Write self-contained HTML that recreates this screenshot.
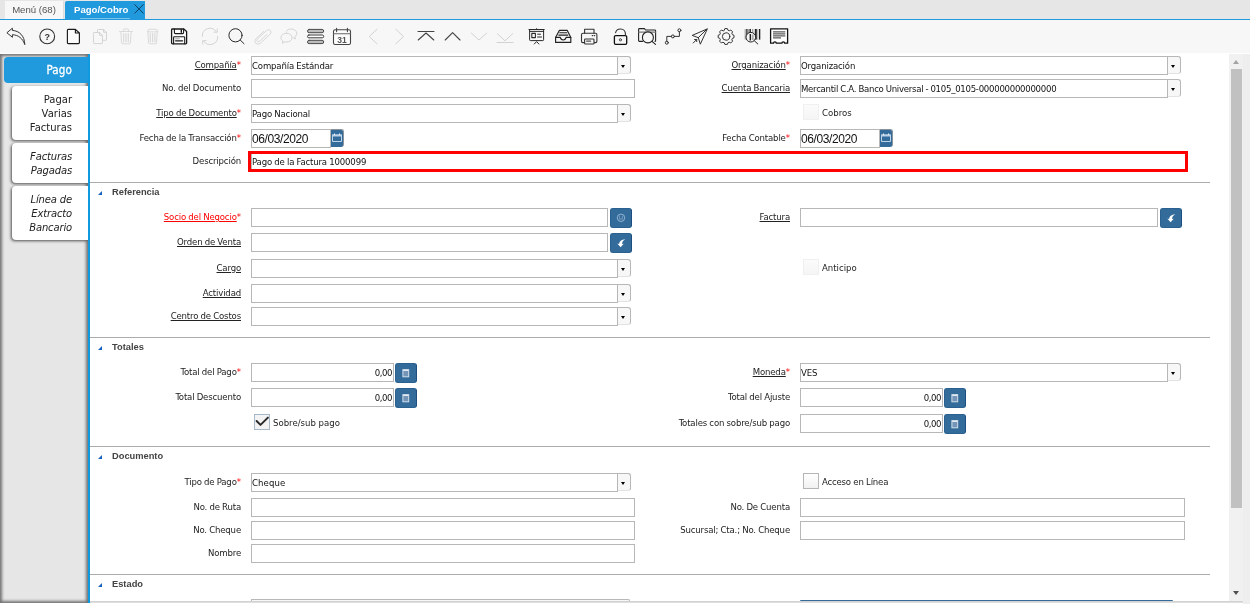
<!DOCTYPE html>
<html lang="es"><head><meta charset="utf-8"><title>Pago/Cobro</title>
<style>
*{box-sizing:border-box;margin:0;padding:0}
html,body{width:1250px;height:604px;overflow:hidden;background:#fff}
body{position:relative;font-family:"Liberation Sans",sans-serif;font-size:10px;color:#222}
.abs{position:absolute}
#app{position:absolute;left:0;top:0;width:1250px;height:604px;overflow:hidden;will-change:transform}
:root{--ff:"DejaVu Sans Condensed","DejaVu Sans","Liberation Sans",sans-serif}
#tabbar{position:absolute;left:0;top:0;width:1250px;height:19px;background:#e6e6e6}
#tabline{position:absolute;left:0;top:19px;width:1250px;height:1px;background:#2199dd}
.toptab{position:absolute;top:1px;height:18px;font-size:9.6px;line-height:17px;white-space:nowrap}
#tmenu{left:5px;width:59px;background:#f7f7f7;color:#555;text-align:center;border-right:1px solid #ddd}
.tul{position:absolute;left:15px;top:17px;width:50px;height:1px;background:#7cc3ec}
#tpago{left:65px;width:80px;background:#2199dd;color:#fff;font-weight:bold;padding-left:9px;border-radius:2px 0 0 0}
#toolbar{position:absolute;left:0;top:20px;width:1250px;height:33px;background:#f7f7f7}
#left{position:absolute;left:0;top:54px;width:88px;height:549px;background:#e6e6e6;box-shadow:inset 0 0 3px 2px rgba(0,0,0,.5)}
#vline{position:absolute;left:88px;top:54px;width:2px;height:549px;background:#0f9ae0}
.ltab{position:absolute;right:0;font-family:"DejaVu Sans",sans-serif;font-size:10px;line-height:14px;text-align:right;padding:7px 16px 5px 0;border-radius:4px 0 0 4px;background:#fff;color:#222;box-shadow:-1px 1px 3px rgba(0,0,0,.65)}
.ltab.sel{background:#2199dd;color:#fff;box-shadow:none;font-family:"DejaVu Sans Condensed","DejaVu Sans",sans-serif;font-size:11.5px;padding:6px 16px 6px 0;-webkit-text-stroke:0.3px #fff;letter-spacing:0.15px}
.ltab i{font-style:italic;letter-spacing:-0.15px}
#content{position:absolute;left:90px;top:53px;width:1139px;height:548px;background:#fff;overflow:hidden}
#sbar{position:absolute;left:1229px;top:54px;width:14px;height:547px;background:#f1f1f1}
#sbar:before{content:"";position:absolute;left:4px;top:6px;border:solid transparent;border-width:0 3.5px 4px 3.5px;border-bottom-color:#a3a3a3}
#sbar:after{content:"";position:absolute;left:4px;top:537px;border:solid transparent;border-width:4px 3.5px 0 3.5px;border-top-color:#505050}
#sthumb{position:absolute;left:2px;top:15px;width:11px;height:439px;background:#c1c1c1}
#rstrip{position:absolute;left:1243px;top:54px;width:7px;height:550px;background:#eeeeee}
#bshadow{position:absolute;left:90px;top:601px;width:1153px;height:2px;background:linear-gradient(#cbcbcb,#e4e4e4)}
.lbl{position:absolute;white-space:nowrap;text-align:right;font-family:var(--ff);font-size:9.5px;line-height:12px;letter-spacing:-0.15px;word-spacing:-0.3px;color:#222}
.lbl u{text-decoration:underline}
.lbl b{color:#f00;font-weight:normal;letter-spacing:0}
.lbl.red{color:#f00}
.inp{position:absolute;height:19px;border:1px solid #b7b7b7;background:#fff;font-family:var(--ff);font-size:9.5px;line-height:17px;letter-spacing:-0.15px;word-spacing:-0.3px;padding-left:0;white-space:nowrap;overflow:hidden;color:#111}
.inp.num{text-align:right;padding-right:1px;letter-spacing:-0.45px}
.inp.date{font-family:"Liberation Sans",sans-serif;font-size:12px;letter-spacing:-0.4px;word-spacing:0;line-height:18px}
.cbtn{position:absolute;width:13px;height:18px;border:1px solid #b7b7b7;border-left:none;border-bottom-color:#e2e2e2;border-radius:0 3px 3px 0;background:#f7f7f7}
.cbtn:after{content:"";position:absolute;left:3px;top:8px;border:solid transparent;border-width:3px 2.5px 0 2.5px;border-top-color:#000}
.bbtn{position:absolute;width:22px;height:20px;border-radius:3px;background:#336b9b;border:1px solid #2a6191;border-right-color:#1c4f80}
.bbtn svg{position:absolute;left:-1px;top:-1px}
.dbtn{position:absolute;width:13px;height:18px;border-radius:0 3px 3px 0;background:#336b9b;border-top:1px solid #8a939b;border-right:1px solid #8a939b}
.dbtn svg{position:absolute;left:0;top:-1px}
.sep{position:absolute;left:90px;width:1120px;height:1px;background:#ababab}
.sec{position:absolute;left:112px;font-weight:bold;font-size:9.3px;line-height:12px;color:#444;white-space:nowrap}
.tri{position:absolute;left:98px;width:0;height:0;border-left:4px solid transparent;border-bottom:4px solid #1560c0}
.chk{position:absolute;width:16px;height:16px;border:1px solid #b5b5b5;background:linear-gradient(#fff,#f1f1f1)}
.chk.on{border-color:#a7b8c7;background:#f3f3f3}
.chk svg{position:absolute;left:-1px;top:-1px}
.chk.dis{border-color:#f0f0f0;background:linear-gradient(#fbfbfb,#f5f5f5)}
.ctext{position:absolute;white-space:nowrap;font-family:var(--ff);font-size:9.5px;line-height:12px;letter-spacing:0;color:#222}
</style></head>
<body>
<div id="app">
<div id="tabbar"></div>
<div class="toptab" id="tmenu">Menú (68)</div>
<div class="toptab" id="tpago">Pago/Cobro<span class="tul"></span><svg class="abs" style="left:68px;top:2px" width="12" height="12" viewBox="0 0 12 12"><path d="M1.4 1.300 L10.600 10.500 M10.600 1.300 L1.400 10.500" stroke="#0d3f63" stroke-width="1" fill="none"/></svg></div>
<div id="tabline"></div>
<div id="toolbar"></div>
<svg class="abs" style="left:0;top:20px" width="800" height="34" viewBox="0 20 800 34" fill="none" stroke="#333" stroke-width="1" stroke-linecap="round" stroke-linejoin="round">
<!-- undo -->
<path d="M7.2 32.5 L12.4 28.2 L12.4 30.4 C19 30.8 24.6 35.5 24.8 44.6 C22.5 38.3 18.5 35 12.4 34.7 L12.4 36.9 Z"/>
<!-- help -->
<circle cx="47.2" cy="36.4" r="7.4" stroke-width="1.1"/>
<text x="47.2" y="39.6" style="font-family:'Liberation Sans',sans-serif" font-size="9" font-weight="bold" text-anchor="middle" fill="#333" stroke="none">?</text>
<!-- new -->
<path d="M68.2 29.3 H75.4 L79.4 33 V42.6 Q79.4 43.6 78.4 43.6 H68.2 Q67.4 43.6 67.4 42.6 V30.3 Q67.4 29.3 68.2 29.3 Z M75.4 29.3 V33 H79.4" stroke="#1a1a1a" stroke-width="1.15" fill="#fbfbfb"/>
<!-- copy (disabled) -->
<g stroke="#d4d4d4">
<path d="M97.5 32 V30.2 Q97.5 29.5 98.2 29.5 H103.5 L106.5 32.3 V39.6 Q106.5 40.3 105.8 40.3 H103"/>
<path d="M103.5 29.5 V32.3 H106.5"/>
<path d="M94.2 32.5 H99.5 L102.5 35.3 V42.8 Q102.5 43.6 101.8 43.6 H94.2 Q93.5 43.6 93.5 42.8 V33.2 Q93.5 32.5 94.2 32.5 Z M99.5 32.5 V35.3 H102.5"/>
</g>
<!-- trash 1 (disabled) -->
<g stroke="#dadada">
<path d="M119.5 31.5 H132.5 M123.5 31.5 V29.6 Q123.5 29 124.1 29 H127.9 Q128.5 29 128.5 29.6 V31.5 M120.8 31.5 L121.6 43 Q121.7 43.8 122.5 43.8 H129.5 Q130.3 43.8 130.4 43 L131.2 31.5"/>
<path d="M123.7 33.5 V41.8 M126 33.5 V41.8 M128.3 33.5 V41.8" stroke-width="1.2"/>
</g>
<!-- trash 2 (disabled) -->
<g stroke="#dadada">
<path d="M147.3 31.5 Q147.6 29.2 150 29.2 H155 Q157.6 29.2 157.9 31.5 Z M147.9 31.5 L148.6 43 Q148.7 43.8 149.5 43.8 H155.6 Q156.4 43.8 156.5 43 L157.3 31.5"/>
<path d="M150.3 33.5 V41.8 M152.6 33.5 V41.8 M154.9 33.5 V41.8" stroke-width="1.2"/>
</g>
<!-- save -->
<g stroke="#1a1a1a" stroke-width="1.3">
<path d="M172.5 29 H183.8 L186.6 31.6 V43 Q186.6 43.8 185.8 43.8 H172.5 Q171.6 43.8 171.6 43 V29.8 Q171.6 29 172.5 29 Z" fill="#fff"/>
<path d="M174.4 29 V32.6 Q174.4 33.6 175.4 33.6 H182.6 Q183.6 33.6 183.6 32.6 V29" stroke-width="1.1"/>
<path d="M181.3 29.8 V32.2" stroke-width="1.4"/>
<path d="M173.6 43.8 V37.6 Q173.6 36.8 174.4 36.8 H183.9 Q184.7 36.8 184.7 37.6 V43.8" stroke-width="1.1"/>
<path d="M175.6 40.8 H182.6" stroke-width="1.3"/>
<path d="M175.6 38.8 H179.3" stroke="#999" stroke-width="0.9"/>
</g>
<!-- refresh (disabled) -->
<g stroke="#d4d4d4">
<path d="M202.3 36.4 A7.6 7.6 0 0 1 216.3 31.8 M217.3 28.8 V32.2 H213.9"/>
<path d="M217.7 36.4 A7.6 7.6 0 0 1 203.7 41 M202.7 44 V40.6 H206.1"/>
</g>
<!-- search -->
<g stroke="#2a2a2a" stroke-width="1">
<circle cx="235.5" cy="35.3" r="6.6"/>
<path d="M240.3 40.1 L244 43.7"/>
</g>
<!-- paperclip (disabled) -->
<g stroke="#d8d8d8">
<path d="M266.8 34.6 L259.8 41.2 Q258.4 42.4 257.3 41.3 Q256.3 40.2 257.5 39 L266.6 30.5 Q268.6 28.7 270.3 30.4 Q272 32.200 270.100 34.200 L260.500 43.200 Q257.900 45.400 255.700 43.200 Q253.700 41.000 256.000 38.600 L263.8 31.3"/>
</g>
<!-- chat (disabled) -->
<g stroke="#d4d4d4">
<path d="M286.500 33.200 C283.200 33.200 280.900 35.200 280.900 37.600 C280.900 39.000 281.700 40.200 282.900 41.000 L282.300 43.200 L284.800 41.800 C285.300 41.900 285.900 42.000 286.500 42.000 C289.800 42.000 292.100 40.000 292.100 37.600 C292.100 35.200 289.800 33.200 286.500 33.200 Z"/>
<path d="M286.300 31.200 C287.300 29.800 289.100 29.000 291.200 29.000 C294.500 29.000 296.800 31.000 296.800 33.400 C296.800 34.800 296.000 36.000 294.900 36.800 L295.400 39.000 L293.600 38.000"/>
</g>
<!-- grid toggle -->
<g stroke="#4a4a4a" stroke-width="1">
<rect x="307.5" y="29.4" width="16.2" height="3.300" rx="1.650" fill="#bdbdbd"/>
<rect x="307.5" y="35" width="16.2" height="2.800" rx="1.400" fill="#fff" stroke="#3a3a3a"/>
<rect x="307.5" y="40.3" width="16.2" height="3.300" rx="1.650" fill="#bdbdbd"/>
</g>
<!-- calendar -->
<g stroke="#444" stroke-width="1.1">
<rect x="333.500" y="29.800" width="17" height="14.700" rx="1.600" fill="#fcfcfc"/>
<path d="M333.500 33.700 H350.500" stroke="#666"/>
<path d="M336.600 28.200 V31.600 M347.400 28.200 V31.600"/>
<text x="342" y="42.600" style="font-family:'Liberation Sans',sans-serif" font-size="8.500" font-weight="bold" text-anchor="middle" fill="#555" stroke="none">31</text>
</g>
<!-- nav -->
<g stroke="#d2d2d2" stroke-width="1">
<path d="M377 29.200 L369.300 36.500 L377 43.800"/>
<path d="M395.800 29.200 L403.500 36.500 L395.800 43.800"/>
</g>
<g stroke="#444" stroke-width="1.100">
<path d="M418 31.500 H434 M418.200 40 L426 33 L433.800 40"/>
<path d="M445.200 40 L452.600 32.700 L460 40"/>
</g>
<g stroke="#d2d2d2" stroke-width="1">
<path d="M471.300 33 L479 40 L486.700 33"/>
<path d="M497.300 33.600 L505 40.800 L512.700 33.600 M497 42.500 H513"/>
</g>
<!-- report -->
<g stroke="#2a2a2a" stroke-width="1">
<path d="M529 29.500 H544.200 M529.600 29.500 V39.800 Q529.600 40.600 530.400 40.600 H542.800 Q543.600 40.600 543.600 39.800 V29.500 M529.600 31.400 H543.600 M536.600 28.700 V29.500"/>
<rect x="531.800" y="33.400" width="3.600" height="4.200" stroke-width="1.100"/>
<path d="M537.600 34.200 H540.500 M537.600 37 H541.500" stroke-width="1"/>
<path d="M534.300 44 L536.600 41.600 L538.900 44"/>
</g>
<!-- archive -->
<g stroke="#222" stroke-width="1.150">
<path d="M555.600 37.400 L559.300 30.400 H567.300 L570.800 37.400 V42.400 H555.600 Z"/>
<path d="M555.600 37.400 H560.300 Q560.800 40 563.200 40 Q565.600 40 566.100 37.400 H570.800"/>
<path d="M559.800 32.700 H566.800" stroke-width="1.100"/>
<path d="M558.800 35.100 H567.800" stroke-width="1.100"/>
</g>
<!-- printer -->
<g stroke="#333" stroke-width="1.100">
<path d="M584.600 33.300 V29.200 H594 V33.300"/>
<path d="M584.600 42.600 H582.800 Q581.500 42.600 581.500 41.300 V34.800 Q581.500 33.300 583 33.300 H595.400 Q596.900 33.300 596.900 34.800 V41.300 Q596.900 42.600 595.600 42.600 H594"/>
<rect x="584.600" y="39" width="9.400" height="5" rx="0.800" fill="#f7f7f7"/>
<path d="M586.600 41.200 H590.600" stroke-width="1.200" stroke="#555"/>
<path d="M592.200 35.600 H592.700 M594.200 35.600 H594.700" stroke-width="1.100"/>
</g>
<!-- lock -->
<g stroke="#111" stroke-width="1.300">
<rect x="614.400" y="35.600" width="12.300" height="8.700" rx="1.200"/>
<path d="M615.600 32.700 A5 5 0 0 1 625.400 33.400 V35.600" stroke-width="1.100" stroke="#333"/>
<circle cx="620.400" cy="39.800" r="1.100" stroke-width="1" stroke="#444"/>
</g>
<!-- zoom across -->
<g stroke="#222" stroke-width="1.100">
<path d="M642.500 41.400 H639.400 Q638.600 41.400 638.600 40.600 V29.400 Q638.600 28.600 639.400 28.600 H644.400 L645.600 30 H654.800 Q655.600 30 655.600 30.800 V40.600 Q655.600 41.300 655 41.400"/>
<path d="M638.600 32.100 H655.600" stroke="#777"/>
<circle cx="647.900" cy="37.400" r="5.500" fill="#f7f7f7"/>
<path d="M652 41.400 L655.500 44.400"/>
</g>
<!-- workflow -->
<g stroke="#333" stroke-width="1">
<circle cx="666.800" cy="42.700" r="1.500"/><circle cx="672.900" cy="36.400" r="1.500"/><circle cx="679.400" cy="30.300" r="1.500"/>
<path d="M666.800 41.200 V36.400 H671.400 M674.400 36.400 H679.400 V31.800"/>
</g>
<!-- send -->
<g stroke="#333" stroke-width="1">
<path d="M707 29 L692.200 35.400 L698.300 37.700 L700.200 43.800 Z M707 29 L698.300 37.700"/>
<path d="M693.200 43 L696.600 39.600 M694.600 39.500 H696.700 V41.600"/>
</g>
<!-- gear -->
<g stroke="#333" stroke-width="1">
<path d="M724.28 30.16 L724.85 28.60 L727.35 28.60 L727.92 30.16 L729.30 30.73 L730.80 30.03 L732.57 31.80 L731.87 33.30 L732.44 34.68 L734.00 35.25 L734.00 37.75 L732.44 38.32 L731.87 39.70 L732.57 41.20 L730.80 42.97 L729.30 42.27 L727.92 42.84 L727.35 44.40 L724.85 44.40 L724.28 42.84 L722.90 42.27 L721.40 42.97 L719.63 41.20 L720.33 39.70 L719.76 38.32 L718.20 37.75 L718.20 35.25 L719.76 34.68 L720.33 33.30 L719.63 31.80 L721.40 30.03 L722.90 30.73 Z" stroke-linejoin="round"/>
<circle cx="726.1" cy="36.500" r="3.700"/>
</g>
<!-- barcode -->
<g stroke="#222" stroke-linecap="butt">
<path d="M745.200 29 V39.600" stroke-width="1" stroke="#999"/>
<path d="M746.900 29 V39.600" stroke-width="1.300"/>
<path d="M748.400 29 V39.600" stroke-width="0.800" stroke="#888"/>
<path d="M750.200 29 V39.600" stroke-width="1.500"/>
<path d="M752.700 29 V39.600" stroke-width="1.200" stroke="#999"/>
<path d="M755.800 29 V39.600" stroke-width="2"/>
<path d="M757.600 29 V39.600" stroke-width="0.800" stroke="#aaa"/>
<path d="M759.600 29 V39.600" stroke-width="1.400"/>
<circle cx="750.800" cy="37.200" r="4.800" stroke-width="1" fill="#f7f7f7"/>
<path d="M750.300 34 V40.400" stroke-width="1.400"/>
<path d="M752.700 34.500 V40" stroke-width="2" stroke="#aaa"/>
<path d="M754.400 40.800 L757.800 44" stroke-width="1" stroke-linecap="round"/>
</g>
<!-- receipt -->
<g stroke="#111" stroke-width="1.300">
<path d="M770.600 43.200 V28.800 H787.600 V43.200 H784.700 A1.400 1.400 0 0 0 781.900 43.200 H776.300 A1.400 1.400 0 0 0 773.500 43.200 Z" fill="#fff"/>
<path d="M773 31.900 H785.300 M773 33.900 H785.300 M773 35.900 H785.300 M773 37.800 H781" stroke="#5a5a5a" stroke-width="1.300" stroke-linecap="butt"/>
</g>
</svg>

<div id="left">
<div class="ltab sel" style="top:3px;left:4px;height:26px">Pago</div>
<div class="ltab" style="top:32px;left:12px;height:54px">Pagar<br>Varias<br>Facturas</div>
<div class="ltab" style="top:89px;left:12px;height:40px"><i>Facturas<br>Pagadas</i></div>
<div class="ltab" style="top:132px;left:12px;height:54px"><i>Línea de<br>Extracto<br>Bancario</i></div>
</div>
<div id="vline"></div>
<div id="content"></div>
<div class="lbl" style="right:1009px;top:59px"><u>Compañía</u><b>*</b></div>
<div class="inp " style="left:251px;top:56px;width:367px">Compañía Estándar</div>
<div class="cbtn" style="left:618px;top:56px"></div>
<div class="lbl" style="right:460px;top:59px"><u>Organización</u><b>*</b></div>
<div class="inp " style="left:800px;top:56px;width:368px">Organización</div>
<div class="cbtn" style="left:1168px;top:56px"></div>
<div class="lbl" style="right:1009px;top:82px">No. del Documento</div>
<div class="inp " style="left:251px;top:79px;width:384px"></div>
<div class="lbl" style="right:460px;top:82px"><u>Cuenta Bancaria</u></div>
<div class="inp " style="left:800px;top:79px;width:368px;letter-spacing:-0.26px">Mercantil C.A. Banco Universal - 0105_0105-000000000000000</div>
<div class="cbtn" style="left:1168px;top:79px"></div>
<div class="lbl" style="right:1009px;top:107px"><u>Tipo de Documento</u><b>*</b></div>
<div class="inp " style="left:251px;top:104px;width:367px">Pago Nacional</div>
<div class="cbtn" style="left:618px;top:104px"></div>
<div class="chk dis" style="left:803px;top:104px"></div><div class="ctext" style="left:822px;top:107px">Cobros</div>
<div class="lbl" style="right:1009px;top:132px">Fecha de la Transacción<b>*</b></div>
<div class="inp date" style="left:251px;top:129px;width:80px">06/03/2020</div>
<div class="dbtn" style="left:331px;top:129px"><svg width="13" height="18" viewBox="0 0 13 18"><path d="M1.500 6 H10.500 V12.500 H1.500 Z" fill="none" stroke="#bcd3e8" stroke-width="1"/><path d="M1 5.500 H11 V7.500 H1 Z" fill="#bcd3e8"/><path d="M3.500 4.500 V6 M8.500 4.500 V6" stroke="#e8f1f8" stroke-width="1"/></svg></div>
<div class="lbl" style="right:460px;top:132px">Fecha Contable<b>*</b></div>
<div class="inp date" style="left:800px;top:129px;width:80px">06/03/2020</div>
<div class="dbtn" style="left:880px;top:129px"><svg width="13" height="18" viewBox="0 0 13 18"><path d="M1.500 6 H10.500 V12.500 H1.500 Z" fill="none" stroke="#bcd3e8" stroke-width="1"/><path d="M1 5.500 H11 V7.500 H1 Z" fill="#bcd3e8"/><path d="M3.500 4.500 V6 M8.500 4.500 V6" stroke="#e8f1f8" stroke-width="1"/></svg></div>
<div class="lbl" style="right:1009px;top:155px">Descripción</div>
<div class="inp " style="left:251px;top:152px;width:935px">Pago de la Factura 1000099</div>
<div class="abs" style="left:248px;top:151px;width:940px;height:21px;border:3px solid #f00"></div>
<div class="sep" style="top:182px"></div>
<div class="tri" style="top:191px"></div>
<div class="sec" style="top:186px">Referencia</div>
<div class="lbl red" style="right:1009px;top:211px"><u>Socio del Negocio</u><b>*</b></div>
<div class="inp " style="left:251px;top:208px;width:357px"></div>
<div class="bbtn" style="left:610px;top:208px"><svg width="22" height="20" viewBox="0 0 22 20"><circle cx="11" cy="9.800" r="3.700" fill="none" stroke="#9fbcd6" stroke-width="0.9"/><path d="M9.600 7.800 V11.600 M12.400 7.800 V11.600 M9.600 11 H12.400" stroke="#86a9c8" stroke-width="0.7" fill="none"/></svg></div>
<div class="lbl" style="right:460px;top:211px"><u>Factura</u></div>
<div class="inp " style="left:800px;top:208px;width:358px"></div>
<div class="bbtn" style="left:1160px;top:208px"><svg width="22" height="20" viewBox="0 0 22 20"><path d="M15.400 6.200 C11.400 6.500 9.200 8.600 9.200 11 L7.300 10.600 L10.600 14.300 L13.700 10.800 L12.100 11 C12 9 13.100 7.400 15.400 6.200 Z" fill="#fff"/></svg></div>
<div class="lbl" style="right:1009px;top:236px"><u>Orden de Venta</u></div>
<div class="inp " style="left:251px;top:233px;width:357px"></div>
<div class="bbtn" style="left:610px;top:233px"><svg width="22" height="20" viewBox="0 0 22 20"><path d="M15.400 6.200 C11.400 6.500 9.200 8.600 9.200 11 L7.300 10.600 L10.600 14.300 L13.700 10.800 L12.100 11 C12 9 13.100 7.400 15.400 6.200 Z" fill="#fff"/></svg></div>
<div class="lbl" style="right:1009px;top:262px"><u>Cargo</u></div>
<div class="inp " style="left:251px;top:259px;width:367px"></div>
<div class="cbtn" style="left:618px;top:259px"></div>
<div class="chk dis" style="left:803px;top:259px"></div><div class="ctext" style="left:822px;top:262px">Anticipo</div>
<div class="lbl" style="right:1009px;top:287px"><u>Actividad</u></div>
<div class="inp " style="left:251px;top:284px;width:367px"></div>
<div class="cbtn" style="left:618px;top:284px"></div>
<div class="lbl" style="right:1009px;top:310px"><u>Centro de Costos</u></div>
<div class="inp " style="left:251px;top:307px;width:367px"></div>
<div class="cbtn" style="left:618px;top:307px"></div>
<div class="sep" style="top:337px"></div>
<div class="tri" style="top:346px"></div>
<div class="sec" style="top:341px">Totales</div>
<div class="lbl" style="right:1009px;top:366px">Total del Pago<b>*</b></div>
<div class="inp num" style="left:251px;top:363px;width:143px">0,00</div>
<div class="bbtn" style="left:395px;top:363px"><svg width="22" height="20" viewBox="0 0 22 20"><rect x="7.900" y="6.600" width="5.800" height="7.200" fill="#7495b8" stroke="#d3dfeb" stroke-width="1"/><path d="M8.200 7.500 H13.400" stroke="#e3ebf3" stroke-width="1"/></svg></div>
<div class="lbl" style="right:460px;top:366px"><u>Moneda</u><b>*</b></div>
<div class="inp " style="left:800px;top:363px;width:368px">VES</div>
<div class="cbtn" style="left:1168px;top:363px"></div>
<div class="lbl" style="right:1009px;top:391px">Total Descuento</div>
<div class="inp num" style="left:251px;top:388px;width:143px">0,00</div>
<div class="bbtn" style="left:395px;top:388px"><svg width="22" height="20" viewBox="0 0 22 20"><rect x="7.900" y="6.600" width="5.800" height="7.200" fill="#7495b8" stroke="#d3dfeb" stroke-width="1"/><path d="M8.200 7.500 H13.400" stroke="#e3ebf3" stroke-width="1"/></svg></div>
<div class="lbl" style="right:460px;top:391px">Total del Ajuste</div>
<div class="inp num" style="left:800px;top:388px;width:143px">0,00</div>
<div class="bbtn" style="left:944px;top:388px"><svg width="22" height="20" viewBox="0 0 22 20"><rect x="7.900" y="6.600" width="5.800" height="7.200" fill="#7495b8" stroke="#d3dfeb" stroke-width="1"/><path d="M8.200 7.500 H13.400" stroke="#e3ebf3" stroke-width="1"/></svg></div>
<div class="chk on" style="left:254px;top:414px"><svg width="16" height="16" viewBox="0 0 16 16"><path d="M2.600 7 L6.500 10.900 L13.900 3.600" fill="none" stroke="#2a2a2a" stroke-width="2" stroke-linecap="round" stroke-linejoin="round"/></svg></div><div class="ctext" style="left:273px;top:417px">Sobre/sub pago</div>
<div class="lbl" style="right:460px;top:417px">Totales con sobre/sub pago</div>
<div class="inp num" style="left:800px;top:414px;width:143px">0,00</div>
<div class="bbtn" style="left:944px;top:414px"><svg width="22" height="20" viewBox="0 0 22 20"><rect x="7.900" y="6.600" width="5.800" height="7.200" fill="#7495b8" stroke="#d3dfeb" stroke-width="1"/><path d="M8.200 7.500 H13.400" stroke="#e3ebf3" stroke-width="1"/></svg></div>
<div class="sep" style="top:446px"></div>
<div class="tri" style="top:455px"></div>
<div class="sec" style="top:450px">Documento</div>
<div class="lbl" style="right:1009px;top:476px">Tipo de Pago<b>*</b></div>
<div class="inp " style="left:251px;top:473px;width:367px;letter-spacing:0.1px">Cheque</div>
<div class="cbtn" style="left:618px;top:473px"></div>
<div class="chk" style="left:803px;top:473px"></div><div class="ctext" style="left:822px;top:476px;letter-spacing:-0.2px">Acceso en Línea</div>
<div class="lbl" style="right:1009px;top:501px">No. de Ruta</div>
<div class="inp " style="left:251px;top:498px;width:384px"></div>
<div class="lbl" style="right:460px;top:501px">No. De Cuenta</div>
<div class="inp " style="left:800px;top:498px;width:385px"></div>
<div class="lbl" style="right:1009px;top:524px">No. Cheque</div>
<div class="inp " style="left:251px;top:521px;width:384px"></div>
<div class="lbl" style="right:460px;top:524px">Sucursal; Cta.; No. Cheque</div>
<div class="inp " style="left:800px;top:521px;width:385px"></div>
<div class="lbl" style="right:1009px;top:547px">Nombre</div>
<div class="inp " style="left:251px;top:544px;width:384px"></div>
<div class="sep" style="top:574px"></div>
<div class="tri" style="top:583px"></div>
<div class="sec" style="top:578px">Estado</div>
<div class="abs" style="left:251px;top:599px;width:379px;height:2px;border-top:1px solid #b8b8b8;border-left:1px solid #b8b8b8;border-right:1px solid #b8b8b8;background:#f7f7f7;border-radius:0 2px 0 0"></div>
<div class="abs" style="left:800px;top:600px;width:373px;height:1px;background:#336b9b;border-radius:2px 2px 0 0"></div>
<div id="sbar"><div id="sthumb"></div></div>
<div id="rstrip"></div>
<div id="bshadow"></div>
</div>
</body></html>
